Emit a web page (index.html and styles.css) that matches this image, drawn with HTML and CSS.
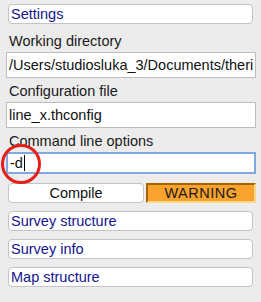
FILE: index.html
```html
<!DOCTYPE html>
<html lang="en">

<head>
    <meta charset="UTF-8">
    <title>Therion settings</title>
    <link rel="stylesheet" href="styles.css">
</head>

<body>
    <div class="panel">

        <button class="link_btn">Settings</button>

        <label class="field_label">Working directory</label>
        <input class="field" type="text" value="/Users/studiosluka_3/Documents/therion">

        <label class="field_label">Configuration file</label>
        <input class="field" type="text" value="line_x.thconfig">

        <label class="field_label">Command line options</label>
        <div class="cmd_wrap">
            <div class="field focused">-d<span class="caret"></span></div>
            <!-- red annotation circle -->
            <span class="mark"></span>
        </div>

        <div class="actions">
            <button class="compile">Compile</button>
            <div class="warning">WARNING</div>
        </div>

        <button class="link_btn">Survey structure</button>
        <button class="link_btn">Survey info</button>
        <button class="link_btn">Map structure</button>

    </div>
</body>

</html>
```

FILE: styles.css
```css
* {
    margin: 0;
    padding: 0;
    box-sizing: border-box;
}

body {
    background: #ececec;
    font-family: 'Liberation Sans', Arial, sans-serif;
    font-size: 14.5px;
    color: #1a1a1a;
    overflow: hidden;
}

.panel {
    display: flex;
    flex-direction: column;
    width: 256px;
    padding: 4px 0 0 6px;
}

.link_btn {
    display: block;
    height: 20px;
    margin: 0 3px 8px 2px;
    padding: 0 2px;
    text-align: left;
    font-family: inherit;
    font-size: 14.5px;
    color: #14148c;
    background: #fff;
    border: 1px solid #c4c4c4;
    border-radius: 4px;
}

.field_label {
    display: block;
    height: 18px;
    line-height: 18px;
    margin: 0 0 2px 3px;
}

.field {
    display: block;
    width: 100%;
    height: 26px;
    margin-bottom: 4px;
    padding: 0 2px;
    font-family: inherit;
    font-size: 14.5px;
    color: #111;
    background: #fff;
    border: 1px solid #bdbdbd;
    outline: 0;
}

.cmd_wrap {
    position: relative;
}

.focused {
    height: 22px;
    line-height: 18px;
    border: 2px solid #7fa9de;
    margin-bottom: 9px;
}

.caret {
    display: inline-block;
    width: 1px;
    height: 16px;
    margin-left: 1px;
    vertical-align: -3px;
    background: #000;
}

.mark {
    position: absolute;
    left: -5px;
    top: -8px;
    width: 40px;
    height: 40px;
    border: 3px solid #e5201b;
    border-radius: 50%;
}

.actions {
    display: flex;
    gap: 2px;
    height: 20px;
    margin-bottom: 8px;
}

.compile {
    width: 136px;
    margin-left: 2px;
    font-family: inherit;
    font-size: 14.5px;
    color: #111;
    background: #fff;
    border: 1px solid #c4c4c4;
    border-radius: 4px;
}

.warning {
    flex: 1;
    text-align: center;
    line-height: 16px;
    letter-spacing: 0.5px;
    background: #f9a22d;
    border: 2px solid;
    border-color: #a86200 #fcd98a #fcd98a #a86200;
}
```
